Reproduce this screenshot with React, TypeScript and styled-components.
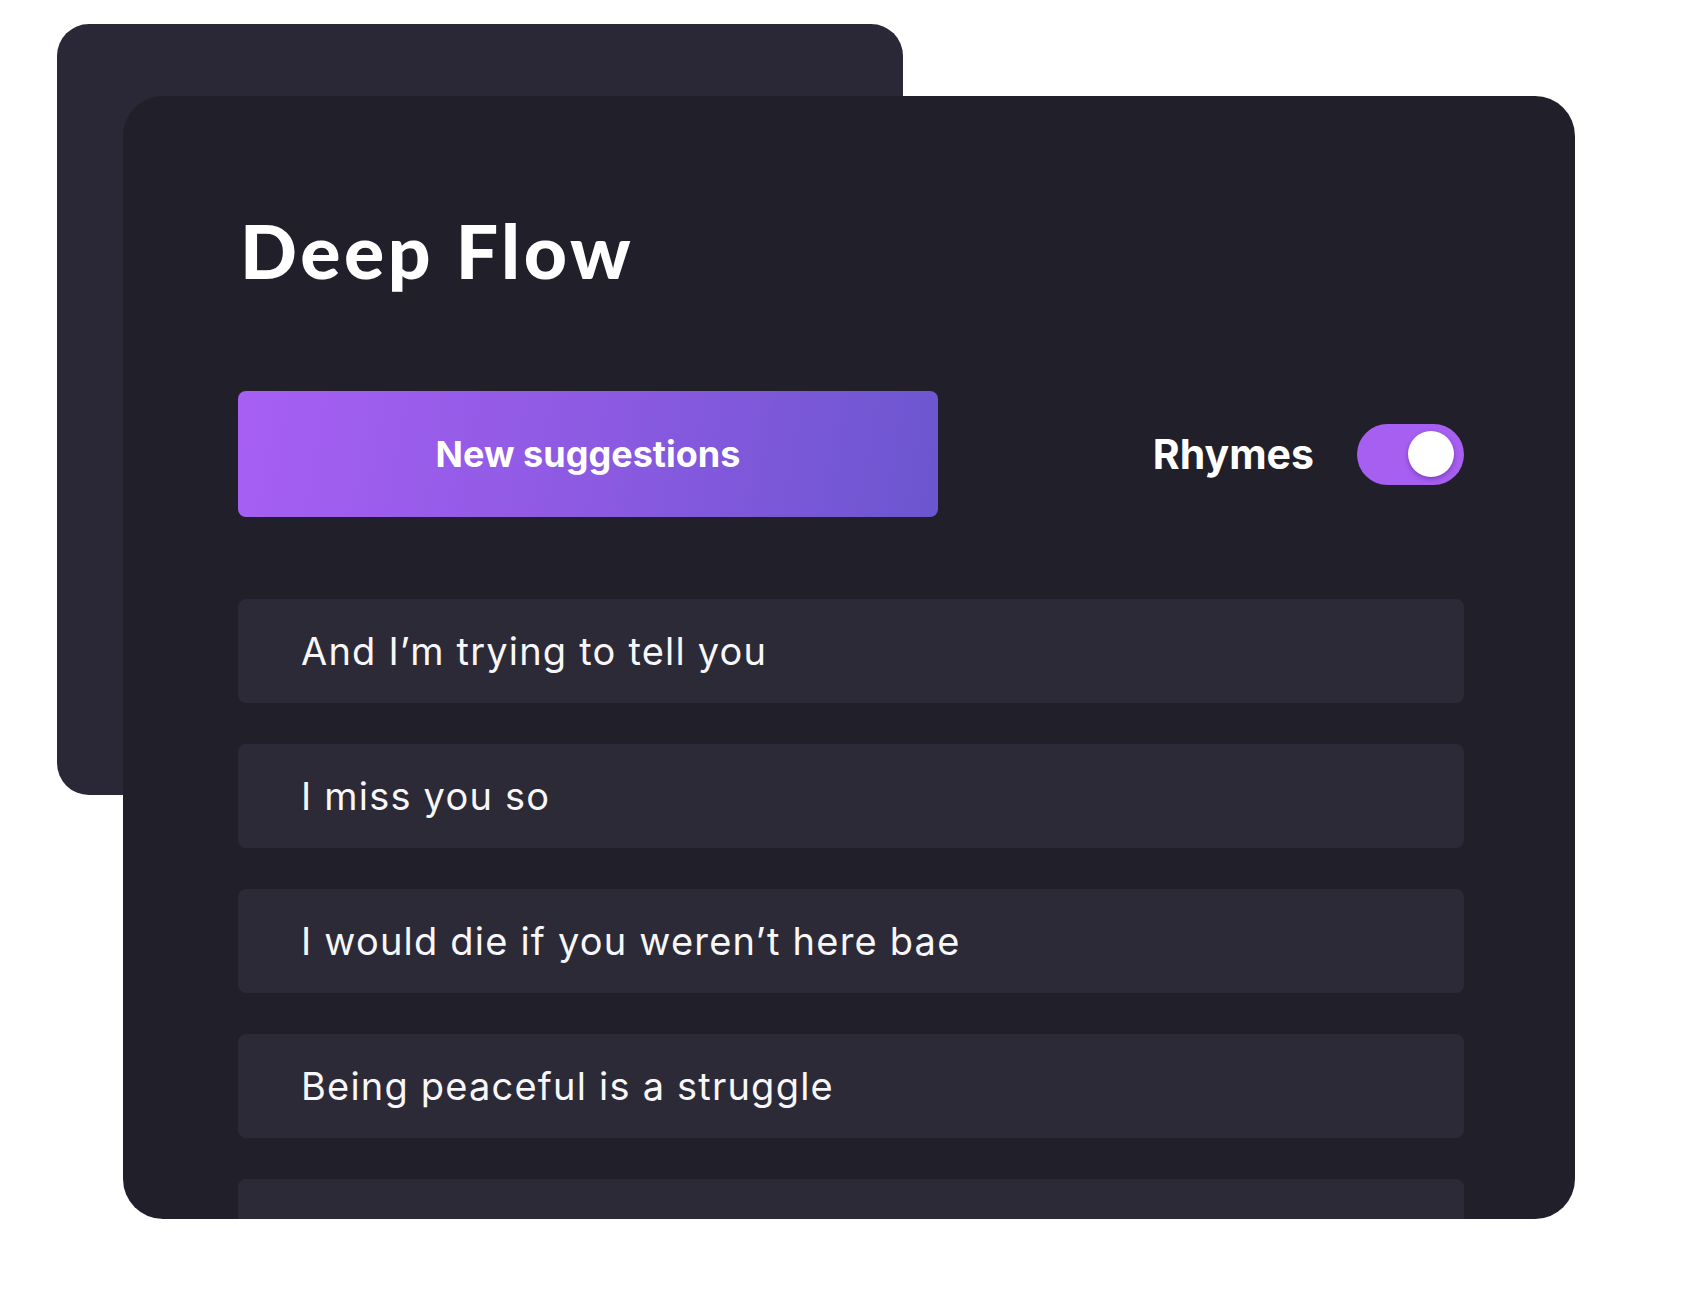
import React, { useState } from "react";
import styled, { createGlobalStyle } from "styled-components";

const GlobalStyle = createGlobalStyle`
  html, body {
    margin: 0;
    padding: 0;
    background: #ffffff;
  }
  body {
    font-family: "Inter", "Noto Sans", sans-serif;
  }
`;

const lines = [
  "And I’m trying to tell you",
  "I miss you so",
  "I would die if you weren’t here bae",
  "Being peaceful is a struggle",
  "",
];

function App() {
  const [rhymes, setRhymes] = useState(true);

  return (
    <>
      <GlobalStyle />
      <Stage>
        <BackCard />
        <FrontCard>
          <Title>Deep Flow</Title>
          <Controls>
            <SuggestButton type="button">New suggestions</SuggestButton>
            <RhymeGroup>
              <RhymeLabel>Rhymes</RhymeLabel>
              <Toggle
                type="button"
                $on={rhymes}
                onClick={() => setRhymes(!rhymes)}
                aria-pressed={rhymes}
              >
                <Knob />
              </Toggle>
            </RhymeGroup>
          </Controls>
          <LineList>
            {lines.map((line, i) => (
              <LineItem key={i}>{line}</LineItem>
            ))}
          </LineList>
        </FrontCard>
      </Stage>
    </>
  );
}

const Stage = styled.div`
  display: grid;
  width: 1698px;
  height: 1314px;
  padding: 24px 0 0 57px;
  box-sizing: border-box;
  align-items: start;
  justify-items: start;
`;

const BackCard = styled.div`
  grid-area: 1 / 1;
  width: 846px;
  height: 771px;
  border-radius: 32px;
  background: #2a2836;
`;

const FrontCard = styled.div`
  grid-area: 1 / 1;
  margin: 72px 0 0 66px;
  width: 1452px;
  height: 1123px;
  box-sizing: border-box;
  padding: 0 111px 0 115px;
  border-radius: 40px;
  background: #211f2a;
  overflow: hidden;
  display: flex;
  flex-direction: column;
`;

const Title = styled.h1`
  margin: 109px 0 0 2px;
  font-family: "Lato", "Open Sans", sans-serif;
  font-weight: 900;
  font-size: 75px;
  line-height: 90px;
  color: #ffffff;
  letter-spacing: 3.6px;
`;

const Controls = styled.div`
  margin-top: 96px;
  display: flex;
  align-items: center;
  justify-content: space-between;
`;

const SuggestButton = styled.button`
  width: 700px;
  height: 126px;
  border: none;
  border-radius: 8px;
  background: linear-gradient(100deg, #a75ff4 0%, #8d5ae2 50%, #6b56cf 100%);
  color: #ffffff;
  font-family: "Inter", sans-serif;
  font-weight: 700;
  font-size: 36px;
  cursor: pointer;
`;

const RhymeGroup = styled.div`
  display: flex;
  align-items: center;
  gap: 43px;
`;

const RhymeLabel = styled.span`
  font-family: "Inter", sans-serif;
  font-weight: 700;
  font-size: 41px;
  color: #ffffff;
`;

const Toggle = styled.button<{ $on: boolean }>`
  display: flex;
  align-items: center;
  justify-content: ${(p) => (p.$on ? "flex-end" : "flex-start")};
  width: 107px;
  height: 61px;
  padding: 0 10px;
  border: none;
  border-radius: 31px;
  background: ${(p) => (p.$on ? "#a75ff2" : "#3a3846")};
  cursor: pointer;
`;

const Knob = styled.span`
  width: 46px;
  height: 46px;
  border-radius: 50%;
  background: #ffffff;
  box-shadow: 0 2px 5px rgba(40, 10, 80, 0.35);
`;

const LineList = styled.div`
  margin-top: 82px;
  display: flex;
  flex-direction: column;
  gap: 41px;
`;

const LineItem = styled.div`
  flex: none;
  height: 104px;
  display: flex;
  align-items: center;
  padding-left: 63px;
  border-radius: 8px;
  background: #2c2a36;
  color: #f7f7f9;
  font-family: "Inter", sans-serif;
  font-size: 38px;
  font-weight: 400;
  letter-spacing: 1.2px;
`;

export default App;
